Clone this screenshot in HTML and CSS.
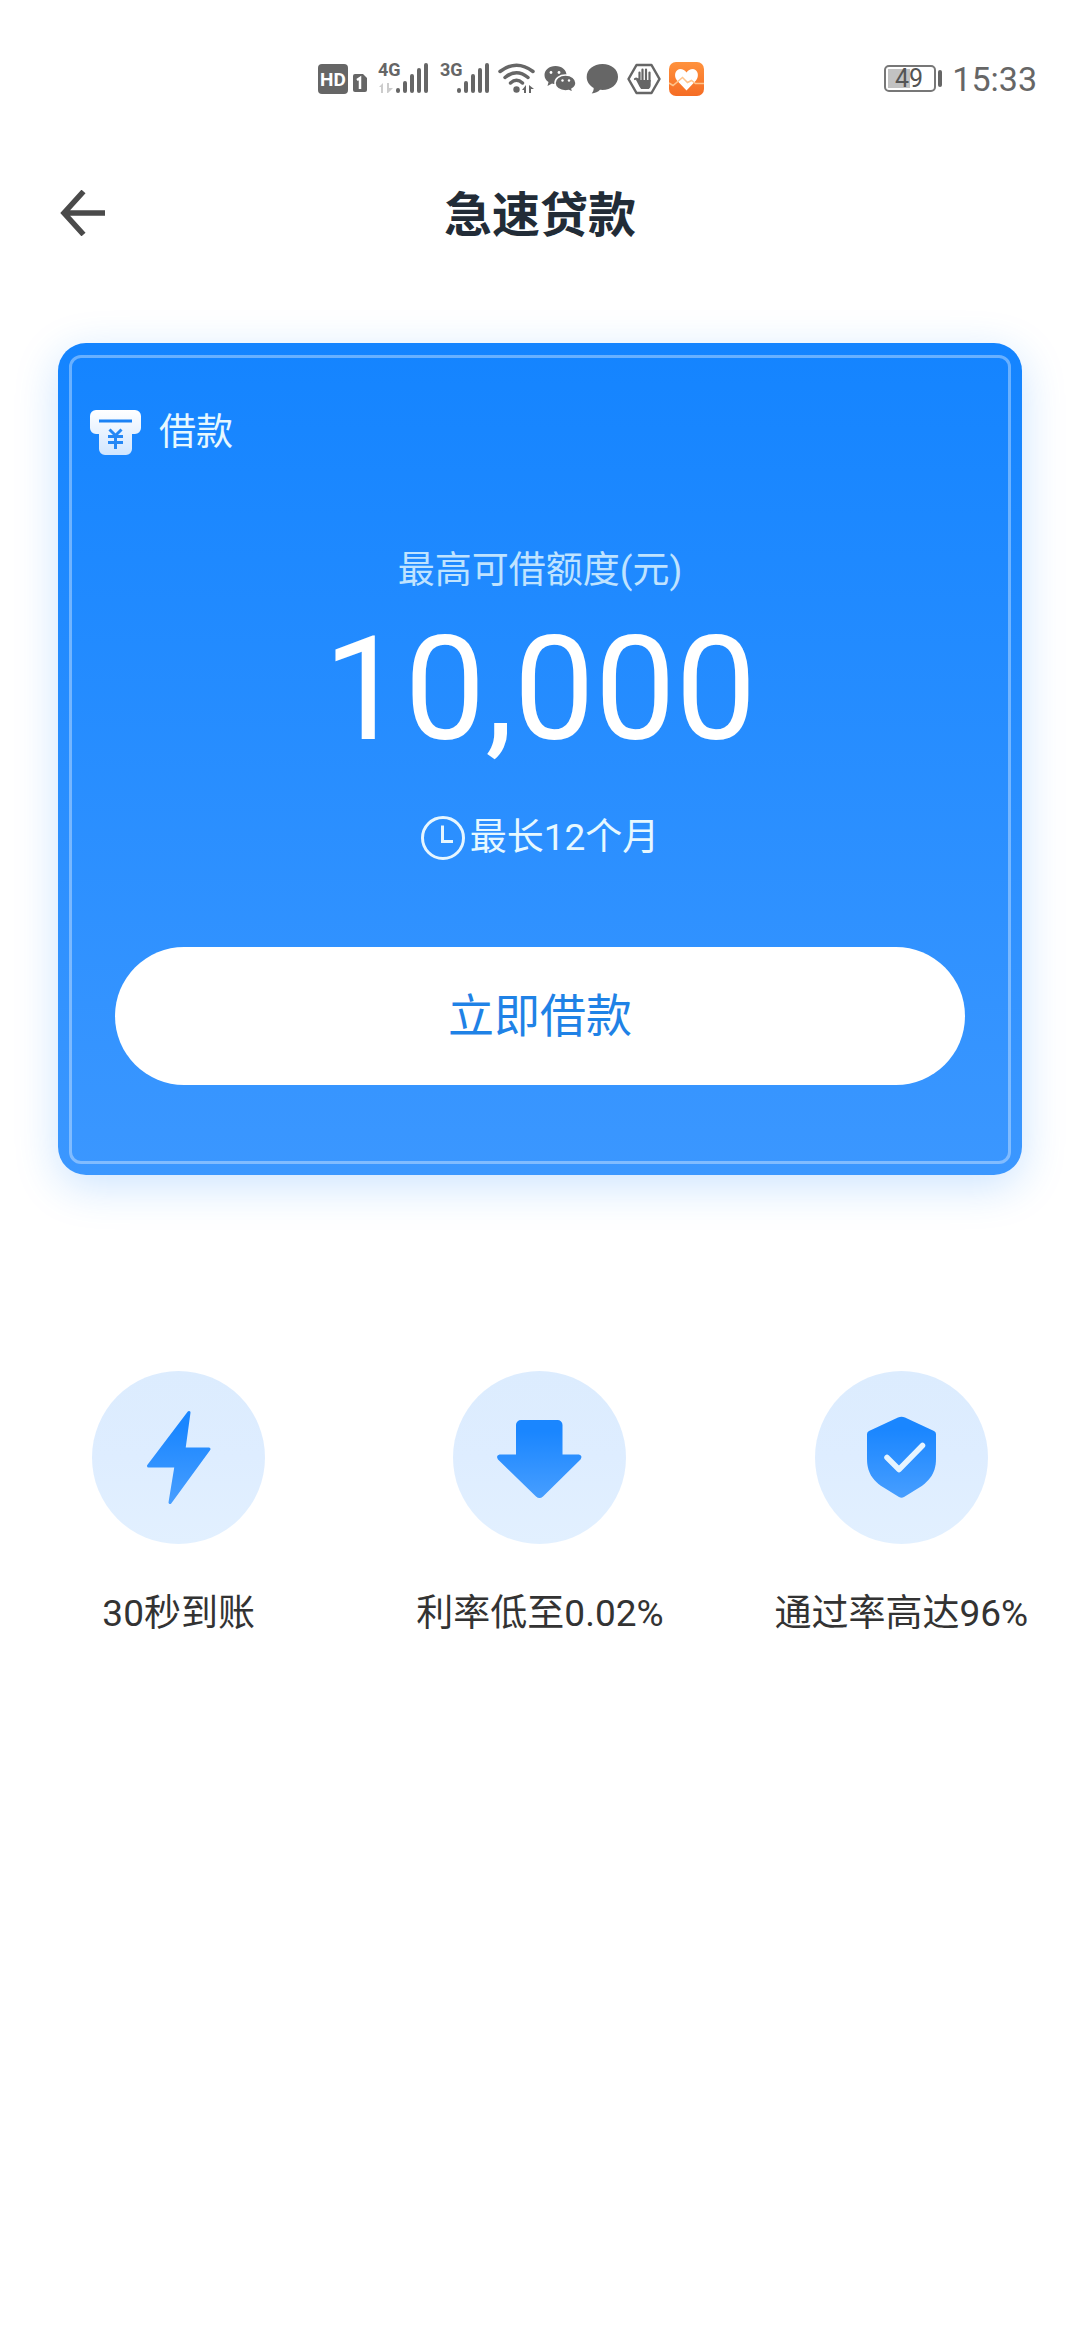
FILE: index.html
```html
<!DOCTYPE html>
<html lang="zh-CN">
<head>
<meta charset="utf-8">
<meta name="viewport" content="width=device-width">
<title>急速贷款</title>
<link rel="stylesheet" href="styles.css">
</head>
<body>
<div class="status-bar">
  <div class="status-icons">
    <svg width="52" height="50" viewBox="0 0 52 50">
      <rect x="0" y="10" width="30" height="30" rx="4" fill="#666"/>
      <text x="15" y="32" text-anchor="middle" class="hd-text">HD</text>
      <path d="M37 20h8l4 4v12a2 2 0 0 1-2 2H37a2 2 0 0 1-2-2V22a2 2 0 0 1 2-2z" fill="#666"/>
      <path d="M39 26l3-2v11" fill="none" stroke="#fff" stroke-width="2.5"/>
    </svg>
    <svg width="54" height="50" viewBox="0 0 54 50">
      <text x="0" y="22" class="net-text">4G</text>
      <path d="M1 33l4-4v10H3v-6zM9 29h2v5h4l-5 5H9z" fill="#ccc"/>
      <path d="M20 36v1M27 29v8M34 22v15M41 16v21M48 11v26" class="bars"/>
    </svg>
    <svg width="50" height="50" viewBox="0 0 50 50">
      <text x="0" y="22" class="net-text">3G</text>
      <path d="M19 36v1M26 29v8M33 22v15M40 16v21M47 11v26" class="bars"/>
    </svg>
    <svg width="38" height="50" viewBox="0 0 38 50">
      <path d="M2 17.500Q18.500 5 35 17.500M7 23.500Q18.500 14 30 23.500M12.500 29Q18.500 23.500 24.500 29" fill="none" stroke="#666" stroke-width="3.500" stroke-linecap="round"/>
      <circle cx="18.500" cy="35.500" r="3.200" fill="#666"/>
      <path d="M24 36l4-5v8h-2v-3zM31 31l5 4h-3v4h-2z" fill="#666"/>
    </svg>
    <svg width="34" height="50" viewBox="0 0 34 50">
      <path d="M11.500 12C5 12 .5 16 .5 21c0 3 1.500 5.500 4 7l-1 4 4.500-2.500c1 .4 2.300.5 3.500.5C18 30 22.500 26 22.500 21S18 12 11.500 12z" fill="#666"/>
      <path d="M21.500 21c-6 0-10.500 3.500-10.500 8s4.500 8 10.500 8c1.200 0 2.300-.2 3.300-.5L29 38.500l-1-3.500c2.500-1.500 4-3.500 4-6 0-4.500-4.500-8-10.500-8z" fill="#666" stroke="#fff" stroke-width="1.500"/>
      <g fill="#fff"><circle cx="7" cy="18.500" r="1.400"/><circle cx="15" cy="18.500" r="1.400"/><circle cx="18.500" cy="26.500" r="1.200"/><circle cx="25" cy="26.500" r="1.200"/></g>
    </svg>
    <svg width="33" height="50" viewBox="0 0 33 50">
      <path d="M16.500 10C7.500 10 .7 15.500 .7 23c0 4.500 2.500 8.500 7 11 0 2.500-.8 4-2 5.500 3.500-.2 6.500-1.700 8.300-3.700 10.500.9 18-5 18-12.800C32 15.500 25.500 10 16.500 10z" fill="#666"/>
    </svg>
    <svg width="34" height="50" viewBox="0 0 34 50">
      <path d="M9.500 11h15L32.500 25l-8 14h-15l-8-14z" fill="#fff" stroke="#666" stroke-width="2.500" stroke-linejoin="round"/>
      <path d="M8 25c1-.8 2.200-.3 3 .7l1.500 1.800V28V18.500M15.500 27V15.500M19 27V15.500M22.500 27V18.500" fill="none" stroke="#666" stroke-width="2.200" stroke-linecap="round"/>
      <path d="M9 26l3 0h11.700v5c0 2-.8 3-2 4h-7.500c-1-1-2-3-5.200-9z" fill="#666"/>
    </svg>
    <svg width="36" height="50" viewBox="0 0 36 50">
      <defs><linearGradient id="health" x2="0" y2="1"><stop stop-color="#ff923d"/><stop offset="1" stop-color="#f56c24"/></linearGradient></defs>
      <rect y="8" width="35" height="34" rx="7" fill="url(#health)"/>
      <path d="M17.500 36.500L8 26.500C4.500 22 6 15.500 11 15c3 0 5 1.300 6.500 3.500C19 16.300 21 15 24 15c5 .5 6.500 7 3 11.500z" fill="#fff"/>
      <path d="M0 29l4 2.500 9.500-8 5 5 4-2 4 3H35" fill="none" stroke="#ffc48c" stroke-width="1.500"/>
    </svg>
  </div>
  <div class="status-right">
    <svg width="58" height="50" viewBox="0 0 58 50">
      <rect x="1" y="12" width="50" height="25" rx="4" fill="#fff" stroke="#777" stroke-width="2"/>
      <rect x="4" y="15" width="22" height="19" fill="#c2c2c2"/>
      <rect x="54" y="16" width="4" height="17" rx="2" fill="#666"/>
      <text x="25" y="33" text-anchor="middle" class="battery-text">49</text>
    </svg>
    <span class="clock">15:33</span>
  </div>
</div>

<header class="title-bar">
  <button class="back" type="button" aria-label="返回">
    <svg width="46" height="46" viewBox="0 0 46 46"><path d="M23.500 1.500L4 23l19.500 21.500M4 23h41" fill="none" stroke="#4a4a4a" stroke-width="5.500"/></svg>
  </button>
  <h1 class="title">急速贷款</h1>
</header>

<main>
  <section class="card">
    <div class="card-inner">
      <div class="card-head">
        <svg width="51" height="46" viewBox="0 0 51 46">
          <defs><linearGradient id="loan" x2="0" y2="46" gradientUnits="userSpaceOnUse"><stop stop-color="#fff"/><stop offset="1" stop-color="#cfe5ff"/></linearGradient></defs>
          <path d="M6 0h39a6 6 0 0 1 6 6v12a6 6 0 0 1-6 6h-3v15a6 6 0 0 1-6 6H15a6 6 0 0 1-6-6V24H6a6 6 0 0 1-6-6V6a6 6 0 0 1 6-6z" fill="url(#loan)"/>
          <path d="M9 11h33" stroke="#1b82f5" stroke-width="3"/>
          <path d="M19.500 19.500l6 6 6-6M18 26.500h15M18 32.500h15M25.500 25v14" fill="none" stroke="#2588f5" stroke-width="3"/>
        </svg>
        <span>借款</span>
      </div>
      <p class="limit-label">最高可借额度(元)</p>
      <p class="limit">10,000</p>
      <p class="term">
        <svg width="44" height="44" viewBox="0 0 44 44"><circle cx="22" cy="22" r="20.500" fill="none" stroke="#e6f6ff" stroke-width="3"/><path d="M21.500 9.500v16H32" fill="none" stroke="#e6f6ff" stroke-width="3"/></svg>
        <span>最长12个月</span>
      </p>
      <button class="apply" type="button">立即借款</button>
    </div>
  </section>

  <ul class="features">
    <li class="feature">
      <svg width="173" height="173" viewBox="0 0 173 173">
        <defs>
          <linearGradient id="disc" x2="0" y2="1"><stop stop-color="#dcecfe"/><stop offset=".5" stop-color="#deedff"/><stop offset="1" stop-color="#e2f0ff"/></linearGradient>
          <linearGradient id="mark" x2="0" y2="1"><stop offset=".15" stop-color="#1a86ff"/><stop offset="1" stop-color="#479eff"/></linearGradient>
        </defs>
        <circle cx="86.500" cy="86.500" r="86.500" fill="url(#disc)"/>
        <path d="M97 41.500L92 78h25L78 131.500 84 95H56.500z" fill="url(#mark)" stroke="url(#mark)" stroke-width="3" stroke-linejoin="round"/>
      </svg>
      <span>30秒到账</span>
    </li>
    <li class="feature">
      <svg width="173" height="173" viewBox="0 0 173 173">
        <circle cx="86.500" cy="86.500" r="86.500" fill="url(#disc)"/>
        <path d="M68 49h36.500a5 5 0 0 1 5 5v29.500H126q4 1 1.500 5L90 125.500q-3.500 3-7 0L45 88.500q-2.500-4 1.500-5H63V54a5 5 0 0 1 5-5z" fill="url(#mark)"/>
      </svg>
      <span>利率低至0.02%</span>
    </li>
    <li class="feature">
      <svg width="173" height="173" viewBox="0 0 173 173">
        <circle cx="86.500" cy="86.500" r="86.500" fill="url(#disc)"/>
        <path d="M83 46.500q3.500-1.500 7 0L119 60q2 1 2 3v25c0 16-9 23-15 27.500L89 126q-2.500 1.500-5 0L67 115.500C60.500 111 52 104 52 88V63q0-2 2-3z" fill="url(#mark)"/>
        <path d="M72 86.500l12 12 23.500-24" fill="none" stroke="#e6f4ff" stroke-width="5.500" stroke-linecap="round" stroke-linejoin="round"/>
      </svg>
      <span>通过率高达96%</span>
    </li>
  </ul>
</main>
</body>
</html>
```
FILE: styles.css
```css
* { box-sizing: border-box; }

body {
  margin: 0;
  background: #fff;
  color: #333;
  font-family: Roboto, "Noto Sans CJK SC", sans-serif;
  font-size: 37px;
  line-height: 50px;
}

svg { display: block; flex: none; }
p, h1, ul { margin: 0; padding: 0; }
button { border: 0; padding: 0; font: inherit; cursor: pointer; }

/* Status bar */
.status-bar {
  display: flex;
  justify-content: space-between;
  padding: 54px 43px 0 318px;
  color: #666;
}
.status-icons { display: flex; gap: 8px; }
.status-right { display: flex; gap: 10px; }
.clock { font-size: 34px; }
.hd-text { font-size: 19px; font-weight: 700; fill: #fff; }
.net-text { font-family: "Liberation Sans Narrow", Roboto, sans-serif; font-size: 18px; font-weight: 700; fill: #666; }
.battery-text { font-size: 25px; fill: #555; }
.bars { fill: none; stroke: #666; stroke-width: 4; stroke-linecap: round; }

/* Title bar */
.title-bar {
  display: grid;
  grid-template-columns: 1fr auto 1fr;
  align-items: center;
  height: 120px;
  margin: 49px 0 70px;
  padding: 0 60px;
}
.back { justify-self: start; background: none; }
.title { padding-top: 5px; color: #222c37; font-size: 48px; line-height: 60px; font-weight: 700; }

/* Loan card */
.card {
  margin: 0 58px;
  padding: 12px 11px 11px;
  border-radius: 28px;
  background: linear-gradient(#1484ff, #3b97ff);
  box-shadow: 0 11px 44px rgba(22, 132, 255, .22);
}
.card-inner {
  display: flex;
  flex-direction: column;
  padding: 50px 43px 76px;
  border: 3px solid rgba(255, 255, 255, .36);
  border-radius: 12px;
  text-align: center;
}
.card-head {
  display: flex;
  align-items: center;
  gap: 18px;
  margin-left: -25px;
  color: #e6f8ff;
}
.limit-label { margin-top: 88px; color: #bfe3ff; }
.limit { margin-top: 22px; color: #fff; font-size: 144px; line-height: 144px; }
.term {
  display: flex;
  align-items: center;
  justify-content: center;
  gap: 5px;
  margin-top: 51px;
  color: #e6f8ff;
}
.apply {
  height: 138px;
  margin-top: 84px;
  border-radius: 69px;
  background: #fff;
  color: #1f82e6;
  font-size: 46px;
}

/* Selling points */
.features {
  display: grid;
  grid-template-columns: repeat(3, 1fr);
  gap: 4px;
  margin-top: 196px;
  list-style: none;
}
.feature {
  display: flex;
  flex-direction: column;
  align-items: center;
  gap: 45px;
}
```
